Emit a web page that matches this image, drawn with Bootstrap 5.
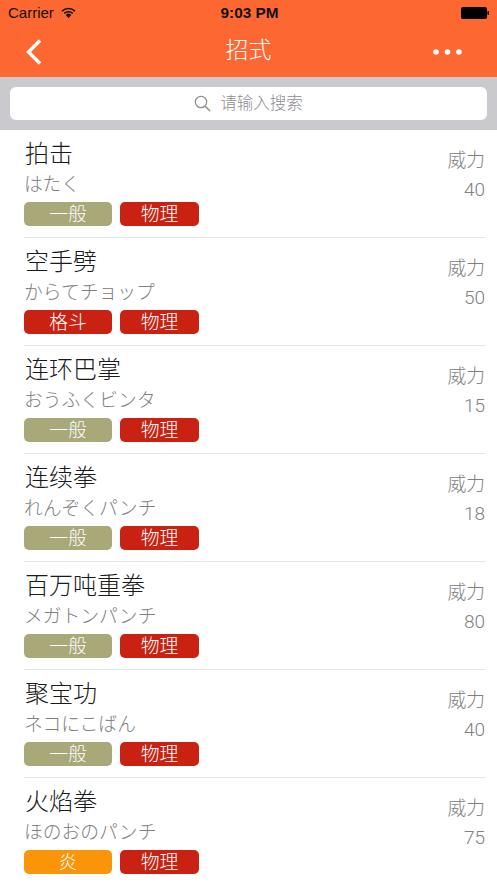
<!DOCTYPE html>
<html lang="zh"><head><meta charset="utf-8">
<link href="https://cdn.jsdelivr.net/npm/bootstrap@5.3.0/dist/css/bootstrap.min.css" rel="stylesheet">
<style>
html,body{height:883px;overflow:hidden;background:#fff}
body{font-family:"Liberation Sans","Noto Sans CJK SC",sans-serif}
.topbar{background:#fd6732;height:77px}
.statusrow{height:26px;padding:0 8px;font-size:15px;color:#111;position:relative}
.clock{position:absolute;left:2px;right:0;top:4px;text-align:center;font-weight:600;font-size:15.300px;line-height:18px}
.carrier{line-height:18px;margin-top:4px}
.wifi{margin-left:7px;margin-top:7px}
.batt{margin-left:auto;margin-top:7px}
.navrow{height:51px;padding:0 35px 0 24px}
.navtitle{position:absolute;left:0;right:0;text-align:center;color:#fff;font-size:23px;font-weight:300;line-height:51px;margin-top:-2px}
.searchwrap{background:#c9c9ce;height:53px;padding:10px}
.searchbox{background:#fff;border-radius:6px;height:33px;color:#8e8e93;font-size:16.500px;font-weight:300;gap:9px}
.moveitem{height:108px;margin-left:24px;margin-right:12px;border-bottom:1px solid #e4e4e4;padding-top:7px}
.moveitem:last-child{border-bottom:0}
.movename{font-size:24px;font-weight:300;line-height:34px;color:#1a1a1a;padding-left:1px}
.movejp{font-size:18.800px;font-weight:300;line-height:24px;color:#808080;margin-top:2px}
.chips{gap:8px;margin-top:5px}
.chip{height:24px;border-radius:5px;color:#fff;font-size:18.800px;font-weight:300;line-height:26px;text-align:center}
.w88{width:88px}.w79{width:79px}
.olive{background:#a8a878}
.red{background:#c92112}
.fire{background:#fa9409}
.powerbox{color:#808080;font-size:18.800px;font-weight:300;text-align:right;line-height:24px;padding-top:12px}
.powerbox .val{margin-top:5px;font-family:"Roboto","Noto Sans CJK SC",sans-serif;font-weight:300;font-size:19px}
</style></head><body>
<div class="topbar">
 <div class="statusrow d-flex align-items-start">
  <span class="carrier">Carrier</span>
  <svg class="wifi" width="15" height="11" viewBox="0 0 16 12"><path d="M1 4.500A10 10 0 0 1 15 4.500M3.400 7A6.600 6.600 0 0 1 12.600 7" fill="none" stroke="#111" stroke-width="1.800"/><path d="M5 8.600a4.300 4.300 0 0 1 6 0L8 12z" fill="#111"/></svg>
  <div class="clock">9:03 PM</div>
  <svg class="batt" width="28" height="12" viewBox="0 0 28 12"><rect x="0" y="0" width="26" height="12" rx="2" fill="#000"/><rect x="26.400" y="4" width="1.600" height="4" rx=".8" fill="#000"/></svg>
 </div>
 <div class="navrow d-flex align-items-center justify-content-between position-relative">
  <svg width="20" height="28" viewBox="0 0 20 28"><path d="M16 2.500 4.500 14 16 25.500" fill="none" stroke="#fff" stroke-width="3.400"/></svg>
  <div class="navtitle">招式</div>
  <svg width="29" height="8" viewBox="0 0 29 8"><circle cx="3" cy="4" r="2.800" fill="#fff"/><circle cx="14.500" cy="4" r="2.800" fill="#fff"/><circle cx="26" cy="4" r="2.800" fill="#fff"/></svg>
 </div>
</div>
<div class="searchwrap">
 <div class="searchbox d-flex align-items-center justify-content-center">
  <svg width="17" height="17" viewBox="0 0 17 17"><circle cx="7" cy="7" r="5.700" fill="none" stroke="#8e8e93" stroke-width="1.200"/><path d="M11 11l5 5" stroke="#8e8e93" stroke-width="1.500"/></svg>
  <span>请输入搜索</span>
 </div>
</div>
<div class="list-wrap">
<div class="moveitem d-flex justify-content-between"><div><div class="movename">拍击</div><div class="movejp">はたく</div><div class="chips d-flex"><div class="chip w88 olive">一般</div><div class="chip w79 red">物理</div></div></div><div class="powerbox"><div>威力</div><div class="val">40</div></div></div>
<div class="moveitem d-flex justify-content-between"><div><div class="movename">空手劈</div><div class="movejp">からてチョップ</div><div class="chips d-flex"><div class="chip w88 red">格斗</div><div class="chip w79 red">物理</div></div></div><div class="powerbox"><div>威力</div><div class="val">50</div></div></div>
<div class="moveitem d-flex justify-content-between"><div><div class="movename">连环巴掌</div><div class="movejp">おうふくビンタ</div><div class="chips d-flex"><div class="chip w88 olive">一般</div><div class="chip w79 red">物理</div></div></div><div class="powerbox"><div>威力</div><div class="val">15</div></div></div>
<div class="moveitem d-flex justify-content-between"><div><div class="movename">连续拳</div><div class="movejp">れんぞくパンチ</div><div class="chips d-flex"><div class="chip w88 olive">一般</div><div class="chip w79 red">物理</div></div></div><div class="powerbox"><div>威力</div><div class="val">18</div></div></div>
<div class="moveitem d-flex justify-content-between"><div><div class="movename">百万吨重拳</div><div class="movejp">メガトンパンチ</div><div class="chips d-flex"><div class="chip w88 olive">一般</div><div class="chip w79 red">物理</div></div></div><div class="powerbox"><div>威力</div><div class="val">80</div></div></div>
<div class="moveitem d-flex justify-content-between"><div><div class="movename">聚宝功</div><div class="movejp">ネコにこばん</div><div class="chips d-flex"><div class="chip w88 olive">一般</div><div class="chip w79 red">物理</div></div></div><div class="powerbox"><div>威力</div><div class="val">40</div></div></div>
<div class="moveitem d-flex justify-content-between"><div><div class="movename">火焰拳</div><div class="movejp">ほのおのパンチ</div><div class="chips d-flex"><div class="chip w88 fire">炎</div><div class="chip w79 red">物理</div></div></div><div class="powerbox"><div>威力</div><div class="val">75</div></div></div>
</div>
</body></html>
